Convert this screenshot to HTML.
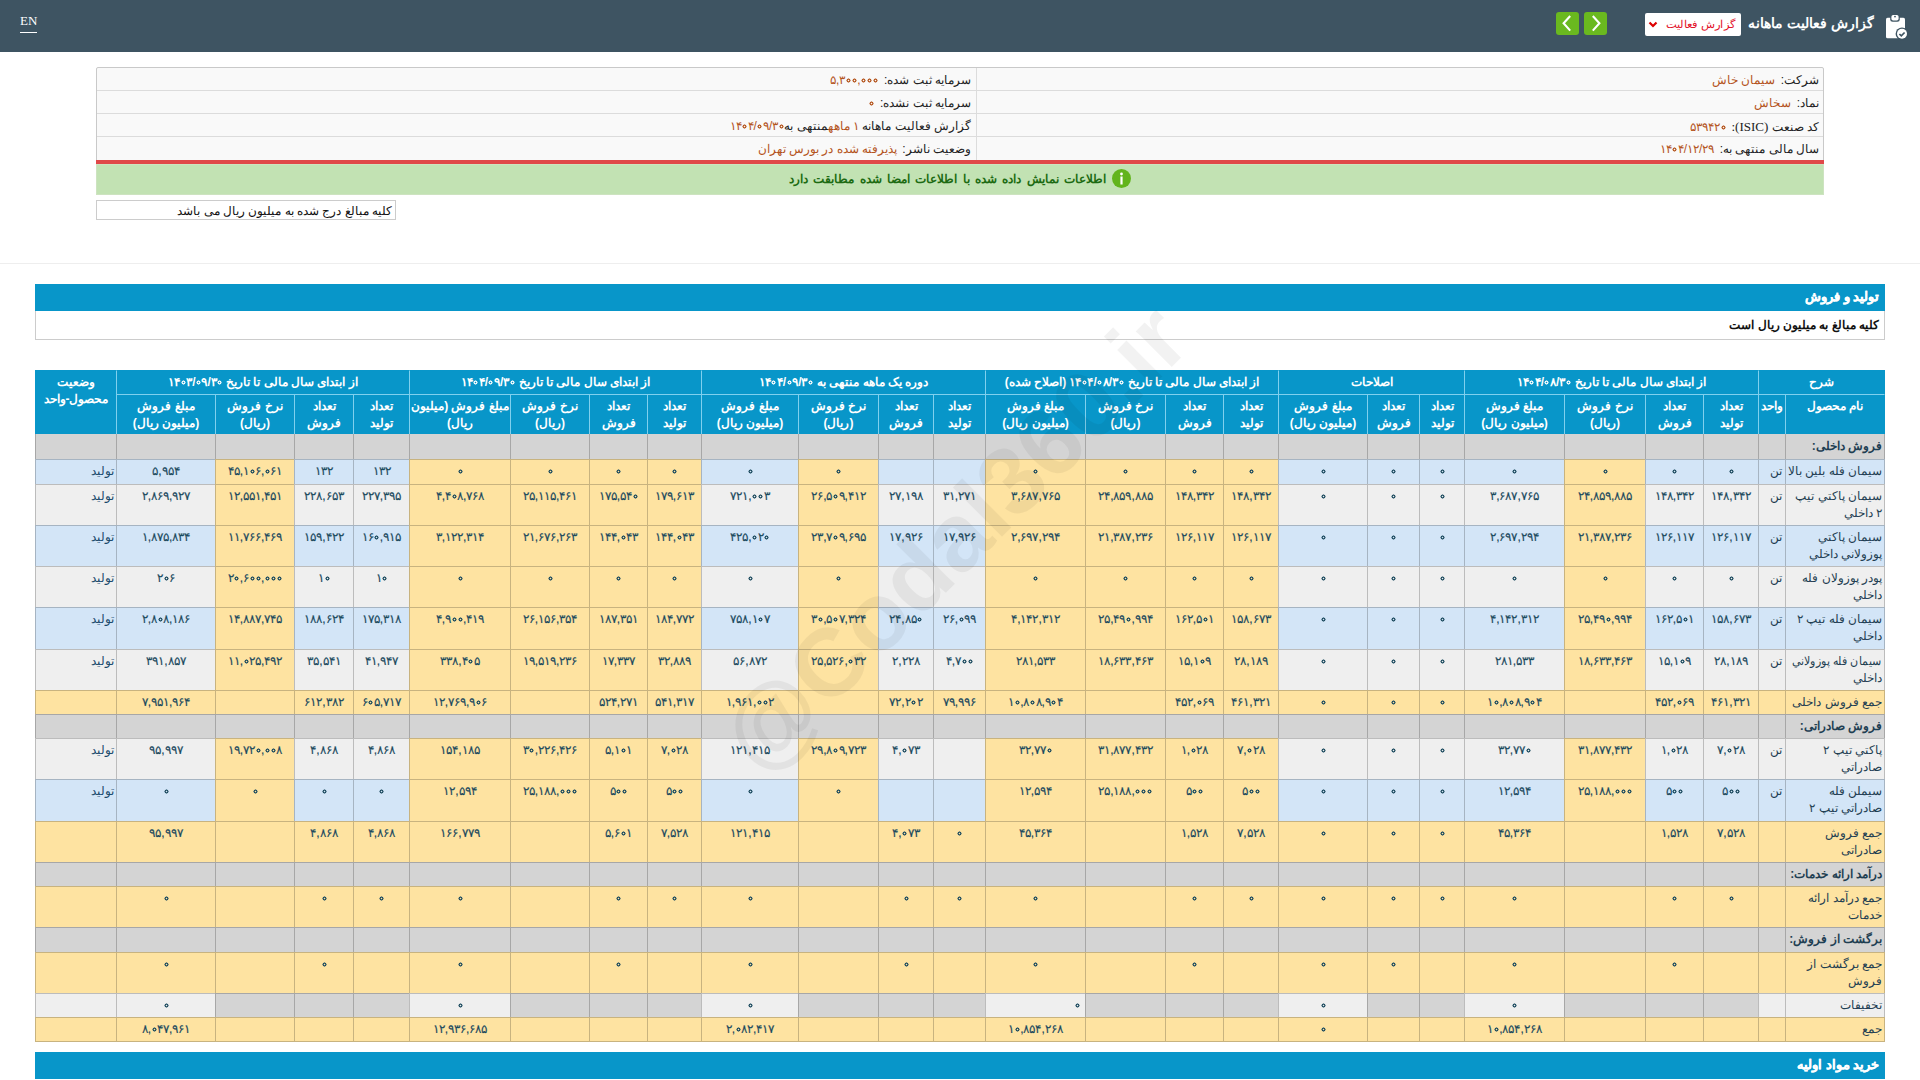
<!DOCTYPE html>
<html lang="fa" dir="rtl">
<head>
<meta charset="utf-8">
<title>گزارش فعالیت ماهانه</title>
<style>
html,body{margin:0;padding:0;}
body{width:1920px;height:1080px;overflow:hidden;position:relative;background:#fff;font-family:"Liberation Sans",sans-serif;font-size:12px;color:#222;}
.abs{position:absolute;}
#top{position:absolute;left:0;top:0;width:1920px;height:52px;background:#3e5462;}
#en{position:absolute;left:20px;top:13px;color:#fff;font-family:"Liberation Serif",serif;font-size:13px;line-height:16px;border-bottom:1px solid #fff;padding-bottom:3px;}
#title{position:absolute;right:46px;top:14px;color:#fff;font-weight:bold;font-size:13.5px;line-height:20px;white-space:nowrap;}
#dd{position:absolute;left:1645px;top:13px;width:96px;height:23px;background:#fff;border-radius:2px;box-sizing:border-box;}
#dd span{position:absolute;right:6px;top:2px;color:#e3122b;font-size:11px;word-spacing:1px;display:inline-block;transform:scaleX(1.05);transform-origin:100% 50%;line-height:18px;white-space:nowrap;}
.gb{position:absolute;top:12px;width:23px;height:23px;background:#6ab91f;border-radius:3px;}
#info{position:absolute;left:96px;top:67px;width:1728px;height:94px;background:#f9f9f9;border:1px solid #c9c9c9;box-sizing:border-box;border-radius:2px 2px 0 0;}
.ir{position:absolute;height:23px;line-height:25px;white-space:nowrap;font-size:12px;color:#222;}
.ir b{font-weight:normal;color:#b4541c;margin-right:2px;}
.ir b.nm0{margin-right:0}
.ser{font-family:"Liberation Serif",serif;font-size:13px;}
.hl{position:absolute;height:1px;background:#dcdcdc;}
#red{position:absolute;left:96px;top:160px;width:1728px;height:4px;background:#e04848;}
#green{position:absolute;left:96px;top:164px;width:1728px;height:31px;background:#c2e2b3;border:1px solid #cde3c0;box-sizing:border-box;}
#green span{position:absolute;left:0px;right:0;top:4px;text-align:center;color:#1c6b12;font-weight:bold;font-size:12px;word-spacing:2px;line-height:20px;white-space:nowrap;}
#green i{display:inline-block;width:19px;height:19px;border-radius:50%;background:#62b41c;vertical-align:-5px;margin-left:6px;}
#note{position:absolute;left:96px;top:200px;width:300px;height:20px;border:1px solid #ccc;box-sizing:border-box;background:#fff;}
#note span{position:absolute;right:3px;top:2px;line-height:16px;font-size:12px;color:#111;white-space:nowrap;}
#sep{position:absolute;left:0;top:263px;width:1920px;height:1px;background:#eee;}
.bar{position:absolute;left:35px;width:1850px;height:27px;background:#0896c9;}
.bar span{position:absolute;right:6px;top:5px;color:#fff;font-weight:bold;font-size:12.5px;line-height:16px;white-space:nowrap;-webkit-text-stroke:0.3px #fff;}
#sub{position:absolute;left:35px;top:311px;width:1850px;height:29px;border:1px solid #ccc;border-top:none;box-sizing:border-box;background:#fff;}
#sub span{position:absolute;right:5px;top:6px;font-weight:bold;font-size:12px;line-height:16px;color:#111;white-space:nowrap;}
.c{position:absolute;box-sizing:border-box;border-style:solid;border-color:rgba(0,0,0,0.21);border-width:1px 0 0 1px;text-align:center;font-size:12px;line-height:17px;padding-top:3px;color:#1a4a6c;overflow:hidden;}
.h{border-color:#7fd0ee;color:#fff;font-weight:bold;line-height:17px;}
.h1{padding-top:3px;}
.hv{padding-top:3px;}
.h2{padding-top:3px;}
.d{padding-top:3px;}
.nm{text-align:right;padding-right:2px;color:#1f3f52;white-space:nowrap;}
.un{text-align:right;padding-right:3px;color:#1f3f52;}
.n{font-weight:normal;-webkit-text-stroke:0.15px #1b4a5e;color:#1b4a5e;font-size:12px;letter-spacing:1px;}
.nb{direction:ltr;unicode-bidi:isolate;}
.z{display:inline-block;width:5px;height:5px;background:radial-gradient(circle at 50% 50%,transparent 0.6px,currentColor 1.1px,currentColor 1.75px,transparent 2.3px);font-size:0;vertical-align:1px;margin:0 0.5px;}
.sec{font-weight:bold;}
.st{text-align:right;padding-right:2px;}
.ra{text-align:right;padding-right:5px;}
#wm{position:absolute;left:954px;top:538px;width:0;height:0;}
#wm span{position:absolute;left:-340px;top:-60px;width:680px;text-align:center;font-size:96px;font-weight:bold;color:rgba(0,0,0,0.05);transform:rotate(-45deg);white-space:nowrap;line-height:120px;direction:ltr;}
</style>
</head>
<body>
<div id="top">
  <div id="en">EN</div>
  <svg class="abs" style="left:1884px;top:14px" width="26" height="27" viewBox="0 0 26 27">
    <rect x="2" y="3.7" width="19" height="20.6" rx="1.6" fill="#fff"/>
    <rect x="6.2" y="0" width="9.6" height="7.8" rx="2.4" fill="#3e5462"/>
    <rect x="7.4" y="1" width="7.2" height="5.6" rx="1.8" fill="#fff"/>
    <circle cx="11" cy="2.6" r="0.9" fill="#3e5462"/>
    <circle cx="18" cy="19.8" r="6.4" fill="#3e5462"/>
    <circle cx="18" cy="19.8" r="5" fill="#fff"/>
    <path d="M15.4 20 l1.9 1.9 l3.3 -3.4" fill="none" stroke="#3e5462" stroke-width="1.7"/>
  </svg>
  <div id="title">گزارش فعالیت ماهانه</div>
  <div id="dd"><span>گزارش فعالیت</span>
    <svg class="abs" style="left:3px;top:8px" width="10" height="7" viewBox="0 0 10 7"><path d="M1.5 1.5 L5 5 L8.5 1.5" fill="none" stroke="#d00" stroke-width="2.2"/></svg>
  </div>
  <div class="gb" style="left:1556px"><svg width="23" height="23" viewBox="0 0 23 23"><path d="M14.2 4 L7.6 11.3 L14.2 18.6" fill="none" stroke="#fff" stroke-width="2.1"/></svg></div>
  <div class="gb" style="left:1584px"><svg width="23" height="23" viewBox="0 0 23 23"><path d="M8.8 4 L15.4 11.3 L8.8 18.6" fill="none" stroke="#fff" stroke-width="2.1"/></svg></div>
</div>

<div id="info">
  <div class="hl" style="left:0;top:22px;width:1726px"></div>
  <div class="hl" style="left:0;top:45px;width:1726px"></div>
  <div class="hl" style="left:0;top:68px;width:1726px"></div>
  <div class="abs" style="left:879px;top:0;width:1px;height:92px;background:#dcdcdc"></div>
  <div class="ir" style="right:4px;top:0">شرکت: <b>سیمان خاش</b></div>
  <div class="ir" style="right:4px;top:23px">نماد: <b>سخاش</b></div>
  <div class="ir" style="right:4px;top:46px">کد صنعت <span class="ser">(ISIC):</span> <b><span class="nb">۵۳۹۴۲<i class="z"></i></span></b></div>
  <div class="ir" style="right:4px;top:69px">سال مالی منتهی به: <b><span class="nb">۱۴<i class="z"></i>۴/۱۲/۲۹</span></b></div>
  <div class="ir" style="right:852px;top:0">سرمایه ثبت شده: <b><span class="nb">۵,۳<i class="z"></i><i class="z"></i>,<i class="z"></i><i class="z"></i><i class="z"></i></span></b></div>
  <div class="ir" style="right:852px;top:23px">سرمایه ثبت نشده: <b><span class="nb"><i class="z"></i></span></b></div>
  <div class="ir" style="right:852px;top:46px">گزارش فعالیت ماهانه <b class="nm0">۱ ماهه</b>منتهی به<b class="nm0"><span class="nb">۱۴<i class="z"></i>۴/<i class="z"></i>۹/۳<i class="z"></i></span></b></div>
  <div class="ir" style="right:852px;top:69px">وضعیت ناشر: <b>پذیرفته شده در بورس تهران</b></div>
</div>
<div id="red"></div>
<div id="green"><span><i><svg width="19" height="19" viewBox="0 0 19 19"><circle cx="9.5" cy="5" r="1.4" fill="#fff"/><rect x="8.4" y="7.5" width="2.2" height="8" fill="#fff"/></svg></i>اطلاعات نمایش داده شده با اطلاعات امضا شده مطابقت دارد</span></div>
<div id="note"><span>کلیه مبالغ درج شده به میلیون ریال می باشد</span></div>
<div id="sep"></div>
<div class="bar" style="top:284px"><span>تولید و فروش</span></div>
<div id="sub"><span>کلیه مبالغ به میلیون ریال است</span></div>
<div class="c h h1" style="left:1758px;top:370px;width:127px;height:24px;background:#0896c9;border-top-color:#0896c9;border-right-color:#0896c9;border-right-width:1px;">شرح</div>
<div class="c h h1" style="left:1464px;top:370px;width:294px;height:24px;background:#0896c9;border-top-color:#0896c9;">از ابتدای سال مالی تا تاریخ <span class="nb">۱۴<i class="z"></i>۴/<i class="z"></i>۸/۳<i class="z"></i></span></div>
<div class="c h h1" style="left:1278px;top:370px;width:186px;height:24px;background:#0896c9;border-top-color:#0896c9;">اصلاحات</div>
<div class="c h h1" style="left:985px;top:370px;width:293px;height:24px;background:#0896c9;border-top-color:#0896c9;">از ابتدای سال مالی تا تاریخ <span class="nb">۱۴<i class="z"></i>۴/<i class="z"></i>۸/۳<i class="z"></i></span> (اصلاح شده)</div>
<div class="c h h1" style="left:701px;top:370px;width:284px;height:24px;background:#0896c9;border-top-color:#0896c9;">دوره یک ماهه منتهی به <span class="nb">۱۴<i class="z"></i>۴/<i class="z"></i>۹/۳<i class="z"></i></span></div>
<div class="c h h1" style="left:409px;top:370px;width:292px;height:24px;background:#0896c9;border-top-color:#0896c9;">از ابتدای سال مالی تا تاریخ <span class="nb">۱۴<i class="z"></i>۴/<i class="z"></i>۹/۳<i class="z"></i></span></div>
<div class="c h h1" style="left:116px;top:370px;width:293px;height:24px;background:#0896c9;border-top-color:#0896c9;">از ابتدای سال مالی تا تاریخ <span class="nb">۱۴<i class="z"></i>۳/<i class="z"></i>۹/۳<i class="z"></i></span></div>
<div class="c h h1 hv" style="left:35px;top:370px;width:81px;height:65px;background:#0896c9;border-top-color:#0896c9;border-left-color:#0896c9;border-bottom-width:1px;">وضعیت<br>محصول-واحد</div>
<div class="c h h2" style="left:1785px;top:394px;width:100px;height:41px;background:#0896c9;border-right-color:#0896c9;border-bottom-width:1px;border-right-width:1px;">نام محصول</div>
<div class="c h h2" style="left:1758px;top:394px;width:27px;height:41px;background:#0896c9;border-bottom-width:1px;">واحد</div>
<div class="c h h2" style="left:1703px;top:394px;width:55px;height:41px;background:#0896c9;border-bottom-width:1px;">تعداد<br>تولید</div>
<div class="c h h2" style="left:1645px;top:394px;width:58px;height:41px;background:#0896c9;border-bottom-width:1px;">تعداد<br>فروش</div>
<div class="c h h2" style="left:1564px;top:394px;width:81px;height:41px;background:#0896c9;border-bottom-width:1px;">نرخ فروش<br>(ریال)</div>
<div class="c h h2" style="left:1464px;top:394px;width:100px;height:41px;background:#0896c9;border-bottom-width:1px;">مبلغ فروش<br>(میلیون ریال)</div>
<div class="c h h2" style="left:1419px;top:394px;width:45px;height:41px;background:#0896c9;border-bottom-width:1px;">تعداد<br>تولید</div>
<div class="c h h2" style="left:1367px;top:394px;width:52px;height:41px;background:#0896c9;border-bottom-width:1px;">تعداد<br>فروش</div>
<div class="c h h2" style="left:1278px;top:394px;width:89px;height:41px;background:#0896c9;border-bottom-width:1px;">مبلغ فروش<br>(میلیون ریال)</div>
<div class="c h h2" style="left:1223px;top:394px;width:55px;height:41px;background:#0896c9;border-bottom-width:1px;">تعداد<br>تولید</div>
<div class="c h h2" style="left:1165px;top:394px;width:58px;height:41px;background:#0896c9;border-bottom-width:1px;">تعداد<br>فروش</div>
<div class="c h h2" style="left:1085px;top:394px;width:80px;height:41px;background:#0896c9;border-bottom-width:1px;">نرخ فروش<br>(ریال)</div>
<div class="c h h2" style="left:985px;top:394px;width:100px;height:41px;background:#0896c9;border-bottom-width:1px;">مبلغ فروش<br>(میلیون ریال)</div>
<div class="c h h2" style="left:933px;top:394px;width:52px;height:41px;background:#0896c9;border-bottom-width:1px;">تعداد<br>تولید</div>
<div class="c h h2" style="left:878px;top:394px;width:55px;height:41px;background:#0896c9;border-bottom-width:1px;">تعداد<br>فروش</div>
<div class="c h h2" style="left:798px;top:394px;width:80px;height:41px;background:#0896c9;border-bottom-width:1px;">نرخ فروش<br>(ریال)</div>
<div class="c h h2" style="left:701px;top:394px;width:97px;height:41px;background:#0896c9;border-bottom-width:1px;">مبلغ فروش<br>(میلیون ریال)</div>
<div class="c h h2" style="left:647px;top:394px;width:54px;height:41px;background:#0896c9;border-bottom-width:1px;">تعداد<br>تولید</div>
<div class="c h h2" style="left:589px;top:394px;width:58px;height:41px;background:#0896c9;border-bottom-width:1px;">تعداد<br>فروش</div>
<div class="c h h2" style="left:510px;top:394px;width:79px;height:41px;background:#0896c9;border-bottom-width:1px;">نرخ فروش<br>(ریال)</div>
<div class="c h h2" style="left:409px;top:394px;width:101px;height:41px;background:#0896c9;border-bottom-width:1px;">مبلغ فروش (میلیون<br>ریال)</div>
<div class="c h h2" style="left:353px;top:394px;width:56px;height:41px;background:#0896c9;border-bottom-width:1px;">تعداد<br>تولید</div>
<div class="c h h2" style="left:294px;top:394px;width:59px;height:41px;background:#0896c9;border-bottom-width:1px;">تعداد<br>فروش</div>
<div class="c h h2" style="left:215px;top:394px;width:79px;height:41px;background:#0896c9;border-bottom-width:1px;">نرخ فروش<br>(ریال)</div>
<div class="c h h2" style="left:116px;top:394px;width:99px;height:41px;background:#0896c9;border-bottom-width:1px;">مبلغ فروش<br>(میلیون ریال)</div>
<div class="c d nm sec" style="left:1785px;top:434px;width:100px;height:25px;background:#d4d4d4;border-top:none;padding-top:4px;border-right-width:1px;">فروش داخلی:</div>
<div class="c d un" style="left:1758px;top:434px;width:27px;height:25px;background:#d4d4d4;border-top:none;padding-top:4px;"></div>
<div class="c d" style="left:1703px;top:434px;width:55px;height:25px;background:#d4d4d4;border-top:none;padding-top:4px;"></div>
<div class="c d" style="left:1645px;top:434px;width:58px;height:25px;background:#d4d4d4;border-top:none;padding-top:4px;"></div>
<div class="c d" style="left:1564px;top:434px;width:81px;height:25px;background:#d4d4d4;border-top:none;padding-top:4px;"></div>
<div class="c d" style="left:1464px;top:434px;width:100px;height:25px;background:#d4d4d4;border-top:none;padding-top:4px;"></div>
<div class="c d" style="left:1419px;top:434px;width:45px;height:25px;background:#d4d4d4;border-top:none;padding-top:4px;"></div>
<div class="c d" style="left:1367px;top:434px;width:52px;height:25px;background:#d4d4d4;border-top:none;padding-top:4px;"></div>
<div class="c d" style="left:1278px;top:434px;width:89px;height:25px;background:#d4d4d4;border-top:none;padding-top:4px;"></div>
<div class="c d" style="left:1223px;top:434px;width:55px;height:25px;background:#d4d4d4;border-top:none;padding-top:4px;"></div>
<div class="c d" style="left:1165px;top:434px;width:58px;height:25px;background:#d4d4d4;border-top:none;padding-top:4px;"></div>
<div class="c d" style="left:1085px;top:434px;width:80px;height:25px;background:#d4d4d4;border-top:none;padding-top:4px;"></div>
<div class="c d" style="left:985px;top:434px;width:100px;height:25px;background:#d4d4d4;border-top:none;padding-top:4px;"></div>
<div class="c d" style="left:933px;top:434px;width:52px;height:25px;background:#d4d4d4;border-top:none;padding-top:4px;"></div>
<div class="c d" style="left:878px;top:434px;width:55px;height:25px;background:#d4d4d4;border-top:none;padding-top:4px;"></div>
<div class="c d" style="left:798px;top:434px;width:80px;height:25px;background:#d4d4d4;border-top:none;padding-top:4px;"></div>
<div class="c d" style="left:701px;top:434px;width:97px;height:25px;background:#d4d4d4;border-top:none;padding-top:4px;"></div>
<div class="c d" style="left:647px;top:434px;width:54px;height:25px;background:#d4d4d4;border-top:none;padding-top:4px;"></div>
<div class="c d" style="left:589px;top:434px;width:58px;height:25px;background:#d4d4d4;border-top:none;padding-top:4px;"></div>
<div class="c d" style="left:510px;top:434px;width:79px;height:25px;background:#d4d4d4;border-top:none;padding-top:4px;"></div>
<div class="c d" style="left:409px;top:434px;width:101px;height:25px;background:#d4d4d4;border-top:none;padding-top:4px;"></div>
<div class="c d" style="left:353px;top:434px;width:56px;height:25px;background:#d4d4d4;border-top:none;padding-top:4px;"></div>
<div class="c d" style="left:294px;top:434px;width:59px;height:25px;background:#d4d4d4;border-top:none;padding-top:4px;"></div>
<div class="c d" style="left:215px;top:434px;width:79px;height:25px;background:#d4d4d4;border-top:none;padding-top:4px;"></div>
<div class="c d" style="left:116px;top:434px;width:99px;height:25px;background:#d4d4d4;border-top:none;padding-top:4px;"></div>
<div class="c d st" style="left:35px;top:434px;width:81px;height:25px;background:#d4d4d4;border-top:none;padding-top:4px;"></div>
<div class="c d nm" style="left:1785px;top:459px;width:100px;height:25px;background:#d3e5f7;border-right-width:1px;">سیمان فله بلین بالا</div>
<div class="c d un" style="left:1758px;top:459px;width:27px;height:25px;background:#d3e5f7;">تن</div>
<div class="c d" style="left:1703px;top:459px;width:55px;height:25px;background:#d3e5f7;"><span class="n"><span class="nb"><i class="z"></i></span></span></div>
<div class="c d" style="left:1645px;top:459px;width:58px;height:25px;background:#d3e5f7;"><span class="n"><span class="nb"><i class="z"></i></span></span></div>
<div class="c d" style="left:1564px;top:459px;width:81px;height:25px;background:#fee3a1;"><span class="n"><span class="nb"><i class="z"></i></span></span></div>
<div class="c d" style="left:1464px;top:459px;width:100px;height:25px;background:#d3e5f7;"><span class="n"><span class="nb"><i class="z"></i></span></span></div>
<div class="c d" style="left:1419px;top:459px;width:45px;height:25px;background:#d3e5f7;"><span class="n"><span class="nb"><i class="z"></i></span></span></div>
<div class="c d" style="left:1367px;top:459px;width:52px;height:25px;background:#d3e5f7;"><span class="n"><span class="nb"><i class="z"></i></span></span></div>
<div class="c d" style="left:1278px;top:459px;width:89px;height:25px;background:#d3e5f7;"><span class="n"><span class="nb"><i class="z"></i></span></span></div>
<div class="c d" style="left:1223px;top:459px;width:55px;height:25px;background:#fee3a1;"><span class="n"><span class="nb"><i class="z"></i></span></span></div>
<div class="c d" style="left:1165px;top:459px;width:58px;height:25px;background:#fee3a1;"><span class="n"><span class="nb"><i class="z"></i></span></span></div>
<div class="c d" style="left:1085px;top:459px;width:80px;height:25px;background:#fee3a1;"><span class="n"><span class="nb"><i class="z"></i></span></span></div>
<div class="c d" style="left:985px;top:459px;width:100px;height:25px;background:#fee3a1;"><span class="n"><span class="nb"><i class="z"></i></span></span></div>
<div class="c d" style="left:933px;top:459px;width:52px;height:25px;background:#d3e5f7;"></div>
<div class="c d" style="left:878px;top:459px;width:55px;height:25px;background:#d3e5f7;"></div>
<div class="c d" style="left:798px;top:459px;width:80px;height:25px;background:#fee3a1;"><span class="n"><span class="nb"><i class="z"></i></span></span></div>
<div class="c d" style="left:701px;top:459px;width:97px;height:25px;background:#d3e5f7;"><span class="n"><span class="nb"><i class="z"></i></span></span></div>
<div class="c d" style="left:647px;top:459px;width:54px;height:25px;background:#fee3a1;"><span class="n"><span class="nb"><i class="z"></i></span></span></div>
<div class="c d" style="left:589px;top:459px;width:58px;height:25px;background:#fee3a1;"><span class="n"><span class="nb"><i class="z"></i></span></span></div>
<div class="c d" style="left:510px;top:459px;width:79px;height:25px;background:#fee3a1;"><span class="n"><span class="nb"><i class="z"></i></span></span></div>
<div class="c d" style="left:409px;top:459px;width:101px;height:25px;background:#fee3a1;"><span class="n"><span class="nb"><i class="z"></i></span></span></div>
<div class="c d" style="left:353px;top:459px;width:56px;height:25px;background:#d3e5f7;"><span class="n">۱۳۲</span></div>
<div class="c d" style="left:294px;top:459px;width:59px;height:25px;background:#d3e5f7;"><span class="n">۱۳۲</span></div>
<div class="c d" style="left:215px;top:459px;width:79px;height:25px;background:#fee3a1;"><span class="n"><span class="nb">۴۵,۱<i class="z"></i>۶,<i class="z"></i>۶۱</span></span></div>
<div class="c d" style="left:116px;top:459px;width:99px;height:25px;background:#d3e5f7;"><span class="n">۵,۹۵۴</span></div>
<div class="c d st" style="left:35px;top:459px;width:81px;height:25px;background:#d3e5f7;">تولید</div>
<div class="c d nm" style="left:1785px;top:484px;width:100px;height:41px;background:#efefef;border-right-width:1px;">سیمان پاکتي تیپ<br>۲ داخلي</div>
<div class="c d un" style="left:1758px;top:484px;width:27px;height:41px;background:#efefef;">تن</div>
<div class="c d" style="left:1703px;top:484px;width:55px;height:41px;background:#efefef;"><span class="n">۱۴۸,۳۴۲</span></div>
<div class="c d" style="left:1645px;top:484px;width:58px;height:41px;background:#efefef;"><span class="n">۱۴۸,۳۴۲</span></div>
<div class="c d" style="left:1564px;top:484px;width:81px;height:41px;background:#fee3a1;"><span class="n">۲۴,۸۵۹,۸۸۵</span></div>
<div class="c d" style="left:1464px;top:484px;width:100px;height:41px;background:#efefef;"><span class="n">۳,۶۸۷,۷۶۵</span></div>
<div class="c d" style="left:1419px;top:484px;width:45px;height:41px;background:#efefef;"><span class="n"><span class="nb"><i class="z"></i></span></span></div>
<div class="c d" style="left:1367px;top:484px;width:52px;height:41px;background:#efefef;"><span class="n"><span class="nb"><i class="z"></i></span></span></div>
<div class="c d" style="left:1278px;top:484px;width:89px;height:41px;background:#efefef;"><span class="n"><span class="nb"><i class="z"></i></span></span></div>
<div class="c d" style="left:1223px;top:484px;width:55px;height:41px;background:#fee3a1;"><span class="n">۱۴۸,۳۴۲</span></div>
<div class="c d" style="left:1165px;top:484px;width:58px;height:41px;background:#fee3a1;"><span class="n">۱۴۸,۳۴۲</span></div>
<div class="c d" style="left:1085px;top:484px;width:80px;height:41px;background:#fee3a1;"><span class="n">۲۴,۸۵۹,۸۸۵</span></div>
<div class="c d" style="left:985px;top:484px;width:100px;height:41px;background:#fee3a1;"><span class="n">۳,۶۸۷,۷۶۵</span></div>
<div class="c d" style="left:933px;top:484px;width:52px;height:41px;background:#efefef;"><span class="n">۳۱,۲۷۱</span></div>
<div class="c d" style="left:878px;top:484px;width:55px;height:41px;background:#efefef;"><span class="n">۲۷,۱۹۸</span></div>
<div class="c d" style="left:798px;top:484px;width:80px;height:41px;background:#fee3a1;"><span class="n"><span class="nb">۲۶,۵<i class="z"></i>۹,۴۱۲</span></span></div>
<div class="c d" style="left:701px;top:484px;width:97px;height:41px;background:#efefef;"><span class="n"><span class="nb">۷۲۱,<i class="z"></i><i class="z"></i>۳</span></span></div>
<div class="c d" style="left:647px;top:484px;width:54px;height:41px;background:#fee3a1;"><span class="n">۱۷۹,۶۱۳</span></div>
<div class="c d" style="left:589px;top:484px;width:58px;height:41px;background:#fee3a1;"><span class="n"><span class="nb">۱۷۵,۵۴<i class="z"></i></span></span></div>
<div class="c d" style="left:510px;top:484px;width:79px;height:41px;background:#fee3a1;"><span class="n">۲۵,۱۱۵,۴۶۱</span></div>
<div class="c d" style="left:409px;top:484px;width:101px;height:41px;background:#fee3a1;"><span class="n"><span class="nb">۴,۴<i class="z"></i>۸,۷۶۸</span></span></div>
<div class="c d" style="left:353px;top:484px;width:56px;height:41px;background:#efefef;"><span class="n">۲۲۷,۳۹۵</span></div>
<div class="c d" style="left:294px;top:484px;width:59px;height:41px;background:#efefef;"><span class="n">۲۲۸,۶۵۳</span></div>
<div class="c d" style="left:215px;top:484px;width:79px;height:41px;background:#fee3a1;"><span class="n">۱۲,۵۵۱,۴۵۱</span></div>
<div class="c d" style="left:116px;top:484px;width:99px;height:41px;background:#efefef;"><span class="n">۲,۸۶۹,۹۲۷</span></div>
<div class="c d st" style="left:35px;top:484px;width:81px;height:41px;background:#efefef;">تولید</div>
<div class="c d nm" style="left:1785px;top:525px;width:100px;height:41px;background:#d3e5f7;border-right-width:1px;">سیمان پاکتي<br>پوزولاني داخلي</div>
<div class="c d un" style="left:1758px;top:525px;width:27px;height:41px;background:#d3e5f7;">تن</div>
<div class="c d" style="left:1703px;top:525px;width:55px;height:41px;background:#d3e5f7;"><span class="n">۱۲۶,۱۱۷</span></div>
<div class="c d" style="left:1645px;top:525px;width:58px;height:41px;background:#d3e5f7;"><span class="n">۱۲۶,۱۱۷</span></div>
<div class="c d" style="left:1564px;top:525px;width:81px;height:41px;background:#fee3a1;"><span class="n">۲۱,۳۸۷,۲۳۶</span></div>
<div class="c d" style="left:1464px;top:525px;width:100px;height:41px;background:#d3e5f7;"><span class="n">۲,۶۹۷,۲۹۴</span></div>
<div class="c d" style="left:1419px;top:525px;width:45px;height:41px;background:#d3e5f7;"><span class="n"><span class="nb"><i class="z"></i></span></span></div>
<div class="c d" style="left:1367px;top:525px;width:52px;height:41px;background:#d3e5f7;"><span class="n"><span class="nb"><i class="z"></i></span></span></div>
<div class="c d" style="left:1278px;top:525px;width:89px;height:41px;background:#d3e5f7;"><span class="n"><span class="nb"><i class="z"></i></span></span></div>
<div class="c d" style="left:1223px;top:525px;width:55px;height:41px;background:#fee3a1;"><span class="n">۱۲۶,۱۱۷</span></div>
<div class="c d" style="left:1165px;top:525px;width:58px;height:41px;background:#fee3a1;"><span class="n">۱۲۶,۱۱۷</span></div>
<div class="c d" style="left:1085px;top:525px;width:80px;height:41px;background:#fee3a1;"><span class="n">۲۱,۳۸۷,۲۳۶</span></div>
<div class="c d" style="left:985px;top:525px;width:100px;height:41px;background:#fee3a1;"><span class="n">۲,۶۹۷,۲۹۴</span></div>
<div class="c d" style="left:933px;top:525px;width:52px;height:41px;background:#d3e5f7;"><span class="n">۱۷,۹۲۶</span></div>
<div class="c d" style="left:878px;top:525px;width:55px;height:41px;background:#d3e5f7;"><span class="n">۱۷,۹۲۶</span></div>
<div class="c d" style="left:798px;top:525px;width:80px;height:41px;background:#fee3a1;"><span class="n"><span class="nb">۲۳,۷<i class="z"></i>۹,۶۹۵</span></span></div>
<div class="c d" style="left:701px;top:525px;width:97px;height:41px;background:#d3e5f7;"><span class="n"><span class="nb">۴۲۵,<i class="z"></i>۲<i class="z"></i></span></span></div>
<div class="c d" style="left:647px;top:525px;width:54px;height:41px;background:#fee3a1;"><span class="n"><span class="nb">۱۴۴,<i class="z"></i>۴۳</span></span></div>
<div class="c d" style="left:589px;top:525px;width:58px;height:41px;background:#fee3a1;"><span class="n"><span class="nb">۱۴۴,<i class="z"></i>۴۳</span></span></div>
<div class="c d" style="left:510px;top:525px;width:79px;height:41px;background:#fee3a1;"><span class="n">۲۱,۶۷۶,۲۶۳</span></div>
<div class="c d" style="left:409px;top:525px;width:101px;height:41px;background:#fee3a1;"><span class="n">۳,۱۲۲,۳۱۴</span></div>
<div class="c d" style="left:353px;top:525px;width:56px;height:41px;background:#d3e5f7;"><span class="n"><span class="nb">۱۶<i class="z"></i>,۹۱۵</span></span></div>
<div class="c d" style="left:294px;top:525px;width:59px;height:41px;background:#d3e5f7;"><span class="n">۱۵۹,۴۲۲</span></div>
<div class="c d" style="left:215px;top:525px;width:79px;height:41px;background:#fee3a1;"><span class="n">۱۱,۷۶۶,۴۶۹</span></div>
<div class="c d" style="left:116px;top:525px;width:99px;height:41px;background:#d3e5f7;"><span class="n">۱,۸۷۵,۸۳۴</span></div>
<div class="c d st" style="left:35px;top:525px;width:81px;height:41px;background:#d3e5f7;">تولید</div>
<div class="c d nm" style="left:1785px;top:566px;width:100px;height:41px;background:#efefef;border-right-width:1px;">پودر پوزولان فله<br>داخلي</div>
<div class="c d un" style="left:1758px;top:566px;width:27px;height:41px;background:#efefef;">تن</div>
<div class="c d" style="left:1703px;top:566px;width:55px;height:41px;background:#efefef;"><span class="n"><span class="nb"><i class="z"></i></span></span></div>
<div class="c d" style="left:1645px;top:566px;width:58px;height:41px;background:#efefef;"><span class="n"><span class="nb"><i class="z"></i></span></span></div>
<div class="c d" style="left:1564px;top:566px;width:81px;height:41px;background:#fee3a1;"><span class="n"><span class="nb"><i class="z"></i></span></span></div>
<div class="c d" style="left:1464px;top:566px;width:100px;height:41px;background:#efefef;"><span class="n"><span class="nb"><i class="z"></i></span></span></div>
<div class="c d" style="left:1419px;top:566px;width:45px;height:41px;background:#efefef;"><span class="n"><span class="nb"><i class="z"></i></span></span></div>
<div class="c d" style="left:1367px;top:566px;width:52px;height:41px;background:#efefef;"><span class="n"><span class="nb"><i class="z"></i></span></span></div>
<div class="c d" style="left:1278px;top:566px;width:89px;height:41px;background:#efefef;"><span class="n"><span class="nb"><i class="z"></i></span></span></div>
<div class="c d" style="left:1223px;top:566px;width:55px;height:41px;background:#fee3a1;"><span class="n"><span class="nb"><i class="z"></i></span></span></div>
<div class="c d" style="left:1165px;top:566px;width:58px;height:41px;background:#fee3a1;"><span class="n"><span class="nb"><i class="z"></i></span></span></div>
<div class="c d" style="left:1085px;top:566px;width:80px;height:41px;background:#fee3a1;"><span class="n"><span class="nb"><i class="z"></i></span></span></div>
<div class="c d" style="left:985px;top:566px;width:100px;height:41px;background:#fee3a1;"><span class="n"><span class="nb"><i class="z"></i></span></span></div>
<div class="c d" style="left:933px;top:566px;width:52px;height:41px;background:#efefef;"></div>
<div class="c d" style="left:878px;top:566px;width:55px;height:41px;background:#efefef;"></div>
<div class="c d" style="left:798px;top:566px;width:80px;height:41px;background:#fee3a1;"><span class="n"><span class="nb"><i class="z"></i></span></span></div>
<div class="c d" style="left:701px;top:566px;width:97px;height:41px;background:#efefef;"><span class="n"><span class="nb"><i class="z"></i></span></span></div>
<div class="c d" style="left:647px;top:566px;width:54px;height:41px;background:#fee3a1;"><span class="n"><span class="nb"><i class="z"></i></span></span></div>
<div class="c d" style="left:589px;top:566px;width:58px;height:41px;background:#fee3a1;"><span class="n"><span class="nb"><i class="z"></i></span></span></div>
<div class="c d" style="left:510px;top:566px;width:79px;height:41px;background:#fee3a1;"><span class="n"><span class="nb"><i class="z"></i></span></span></div>
<div class="c d" style="left:409px;top:566px;width:101px;height:41px;background:#fee3a1;"><span class="n"><span class="nb"><i class="z"></i></span></span></div>
<div class="c d" style="left:353px;top:566px;width:56px;height:41px;background:#efefef;"><span class="n"><span class="nb">۱<i class="z"></i></span></span></div>
<div class="c d" style="left:294px;top:566px;width:59px;height:41px;background:#efefef;"><span class="n"><span class="nb">۱<i class="z"></i></span></span></div>
<div class="c d" style="left:215px;top:566px;width:79px;height:41px;background:#fee3a1;"><span class="n"><span class="nb">۲<i class="z"></i>,۶<i class="z"></i><i class="z"></i>,<i class="z"></i><i class="z"></i><i class="z"></i></span></span></div>
<div class="c d" style="left:116px;top:566px;width:99px;height:41px;background:#efefef;"><span class="n"><span class="nb">۲<i class="z"></i>۶</span></span></div>
<div class="c d st" style="left:35px;top:566px;width:81px;height:41px;background:#efefef;">تولید</div>
<div class="c d nm" style="left:1785px;top:607px;width:100px;height:42px;background:#d3e5f7;border-right-width:1px;">سیمان فله تیپ ۲<br>داخلي</div>
<div class="c d un" style="left:1758px;top:607px;width:27px;height:42px;background:#d3e5f7;">تن</div>
<div class="c d" style="left:1703px;top:607px;width:55px;height:42px;background:#d3e5f7;"><span class="n">۱۵۸,۶۷۳</span></div>
<div class="c d" style="left:1645px;top:607px;width:58px;height:42px;background:#d3e5f7;"><span class="n"><span class="nb">۱۶۲,۵<i class="z"></i>۱</span></span></div>
<div class="c d" style="left:1564px;top:607px;width:81px;height:42px;background:#fee3a1;"><span class="n"><span class="nb">۲۵,۴۹<i class="z"></i>,۹۹۴</span></span></div>
<div class="c d" style="left:1464px;top:607px;width:100px;height:42px;background:#d3e5f7;"><span class="n">۴,۱۴۲,۳۱۲</span></div>
<div class="c d" style="left:1419px;top:607px;width:45px;height:42px;background:#d3e5f7;"><span class="n"><span class="nb"><i class="z"></i></span></span></div>
<div class="c d" style="left:1367px;top:607px;width:52px;height:42px;background:#d3e5f7;"><span class="n"><span class="nb"><i class="z"></i></span></span></div>
<div class="c d" style="left:1278px;top:607px;width:89px;height:42px;background:#d3e5f7;"><span class="n"><span class="nb"><i class="z"></i></span></span></div>
<div class="c d" style="left:1223px;top:607px;width:55px;height:42px;background:#fee3a1;"><span class="n">۱۵۸,۶۷۳</span></div>
<div class="c d" style="left:1165px;top:607px;width:58px;height:42px;background:#fee3a1;"><span class="n"><span class="nb">۱۶۲,۵<i class="z"></i>۱</span></span></div>
<div class="c d" style="left:1085px;top:607px;width:80px;height:42px;background:#fee3a1;"><span class="n"><span class="nb">۲۵,۴۹<i class="z"></i>,۹۹۴</span></span></div>
<div class="c d" style="left:985px;top:607px;width:100px;height:42px;background:#fee3a1;"><span class="n">۴,۱۴۲,۳۱۲</span></div>
<div class="c d" style="left:933px;top:607px;width:52px;height:42px;background:#d3e5f7;"><span class="n"><span class="nb">۲۶,<i class="z"></i>۹۹</span></span></div>
<div class="c d" style="left:878px;top:607px;width:55px;height:42px;background:#d3e5f7;"><span class="n"><span class="nb">۲۴,۸۵<i class="z"></i></span></span></div>
<div class="c d" style="left:798px;top:607px;width:80px;height:42px;background:#fee3a1;"><span class="n"><span class="nb">۳<i class="z"></i>,۵<i class="z"></i>۷,۳۲۴</span></span></div>
<div class="c d" style="left:701px;top:607px;width:97px;height:42px;background:#d3e5f7;"><span class="n"><span class="nb">۷۵۸,۱<i class="z"></i>۷</span></span></div>
<div class="c d" style="left:647px;top:607px;width:54px;height:42px;background:#fee3a1;"><span class="n">۱۸۴,۷۷۲</span></div>
<div class="c d" style="left:589px;top:607px;width:58px;height:42px;background:#fee3a1;"><span class="n">۱۸۷,۳۵۱</span></div>
<div class="c d" style="left:510px;top:607px;width:79px;height:42px;background:#fee3a1;"><span class="n">۲۶,۱۵۶,۳۵۴</span></div>
<div class="c d" style="left:409px;top:607px;width:101px;height:42px;background:#fee3a1;"><span class="n"><span class="nb">۴,۹<i class="z"></i><i class="z"></i>,۴۱۹</span></span></div>
<div class="c d" style="left:353px;top:607px;width:56px;height:42px;background:#d3e5f7;"><span class="n">۱۷۵,۳۱۸</span></div>
<div class="c d" style="left:294px;top:607px;width:59px;height:42px;background:#d3e5f7;"><span class="n">۱۸۸,۶۲۴</span></div>
<div class="c d" style="left:215px;top:607px;width:79px;height:42px;background:#fee3a1;"><span class="n">۱۴,۸۸۷,۷۴۵</span></div>
<div class="c d" style="left:116px;top:607px;width:99px;height:42px;background:#d3e5f7;"><span class="n"><span class="nb">۲,۸<i class="z"></i>۸,۱۸۶</span></span></div>
<div class="c d st" style="left:35px;top:607px;width:81px;height:42px;background:#d3e5f7;">تولید</div>
<div class="c d nm" style="left:1785px;top:649px;width:100px;height:41px;background:#efefef;border-right-width:1px;"><span style="display:inline-block;transform:scaleX(0.92);transform-origin:100% 50%">سیمان فله پوزولاني</span><br>داخلي</div>
<div class="c d un" style="left:1758px;top:649px;width:27px;height:41px;background:#efefef;">تن</div>
<div class="c d" style="left:1703px;top:649px;width:55px;height:41px;background:#efefef;"><span class="n">۲۸,۱۸۹</span></div>
<div class="c d" style="left:1645px;top:649px;width:58px;height:41px;background:#efefef;"><span class="n"><span class="nb">۱۵,۱<i class="z"></i>۹</span></span></div>
<div class="c d" style="left:1564px;top:649px;width:81px;height:41px;background:#fee3a1;"><span class="n">۱۸,۶۳۳,۴۶۳</span></div>
<div class="c d" style="left:1464px;top:649px;width:100px;height:41px;background:#efefef;"><span class="n">۲۸۱,۵۳۳</span></div>
<div class="c d" style="left:1419px;top:649px;width:45px;height:41px;background:#efefef;"><span class="n"><span class="nb"><i class="z"></i></span></span></div>
<div class="c d" style="left:1367px;top:649px;width:52px;height:41px;background:#efefef;"><span class="n"><span class="nb"><i class="z"></i></span></span></div>
<div class="c d" style="left:1278px;top:649px;width:89px;height:41px;background:#efefef;"><span class="n"><span class="nb"><i class="z"></i></span></span></div>
<div class="c d" style="left:1223px;top:649px;width:55px;height:41px;background:#fee3a1;"><span class="n">۲۸,۱۸۹</span></div>
<div class="c d" style="left:1165px;top:649px;width:58px;height:41px;background:#fee3a1;"><span class="n"><span class="nb">۱۵,۱<i class="z"></i>۹</span></span></div>
<div class="c d" style="left:1085px;top:649px;width:80px;height:41px;background:#fee3a1;"><span class="n">۱۸,۶۳۳,۴۶۳</span></div>
<div class="c d" style="left:985px;top:649px;width:100px;height:41px;background:#fee3a1;"><span class="n">۲۸۱,۵۳۳</span></div>
<div class="c d" style="left:933px;top:649px;width:52px;height:41px;background:#efefef;"><span class="n"><span class="nb">۴,۷<i class="z"></i><i class="z"></i></span></span></div>
<div class="c d" style="left:878px;top:649px;width:55px;height:41px;background:#efefef;"><span class="n">۲,۲۲۸</span></div>
<div class="c d" style="left:798px;top:649px;width:80px;height:41px;background:#fee3a1;"><span class="n"><span class="nb">۲۵,۵۲۶,<i class="z"></i>۳۲</span></span></div>
<div class="c d" style="left:701px;top:649px;width:97px;height:41px;background:#efefef;"><span class="n">۵۶,۸۷۲</span></div>
<div class="c d" style="left:647px;top:649px;width:54px;height:41px;background:#fee3a1;"><span class="n">۳۲,۸۸۹</span></div>
<div class="c d" style="left:589px;top:649px;width:58px;height:41px;background:#fee3a1;"><span class="n">۱۷,۳۳۷</span></div>
<div class="c d" style="left:510px;top:649px;width:79px;height:41px;background:#fee3a1;"><span class="n">۱۹,۵۱۹,۲۳۶</span></div>
<div class="c d" style="left:409px;top:649px;width:101px;height:41px;background:#fee3a1;"><span class="n"><span class="nb">۳۳۸,۴<i class="z"></i>۵</span></span></div>
<div class="c d" style="left:353px;top:649px;width:56px;height:41px;background:#efefef;"><span class="n">۴۱,۹۴۷</span></div>
<div class="c d" style="left:294px;top:649px;width:59px;height:41px;background:#efefef;"><span class="n">۳۵,۵۴۱</span></div>
<div class="c d" style="left:215px;top:649px;width:79px;height:41px;background:#fee3a1;"><span class="n"><span class="nb">۱۱,<i class="z"></i>۲۵,۴۹۲</span></span></div>
<div class="c d" style="left:116px;top:649px;width:99px;height:41px;background:#efefef;"><span class="n">۳۹۱,۸۵۷</span></div>
<div class="c d st" style="left:35px;top:649px;width:81px;height:41px;background:#efefef;">تولید</div>
<div class="c d nm" style="left:1785px;top:690px;width:100px;height:24px;background:#fee3a1;border-right-width:1px;">جمع فروش داخلی</div>
<div class="c d un" style="left:1758px;top:690px;width:27px;height:24px;background:#fee3a1;"></div>
<div class="c d" style="left:1703px;top:690px;width:55px;height:24px;background:#fee3a1;"><span class="n">۴۶۱,۳۲۱</span></div>
<div class="c d" style="left:1645px;top:690px;width:58px;height:24px;background:#fee3a1;"><span class="n"><span class="nb">۴۵۲,<i class="z"></i>۶۹</span></span></div>
<div class="c d" style="left:1564px;top:690px;width:81px;height:24px;background:#fee3a1;"></div>
<div class="c d" style="left:1464px;top:690px;width:100px;height:24px;background:#fee3a1;"><span class="n"><span class="nb">۱<i class="z"></i>,۸<i class="z"></i>۸,۹<i class="z"></i>۴</span></span></div>
<div class="c d" style="left:1419px;top:690px;width:45px;height:24px;background:#fee3a1;"><span class="n"><span class="nb"><i class="z"></i></span></span></div>
<div class="c d" style="left:1367px;top:690px;width:52px;height:24px;background:#fee3a1;"><span class="n"><span class="nb"><i class="z"></i></span></span></div>
<div class="c d" style="left:1278px;top:690px;width:89px;height:24px;background:#fee3a1;"><span class="n"><span class="nb"><i class="z"></i></span></span></div>
<div class="c d" style="left:1223px;top:690px;width:55px;height:24px;background:#fee3a1;"><span class="n">۴۶۱,۳۲۱</span></div>
<div class="c d" style="left:1165px;top:690px;width:58px;height:24px;background:#fee3a1;"><span class="n"><span class="nb">۴۵۲,<i class="z"></i>۶۹</span></span></div>
<div class="c d" style="left:1085px;top:690px;width:80px;height:24px;background:#fee3a1;"></div>
<div class="c d" style="left:985px;top:690px;width:100px;height:24px;background:#fee3a1;"><span class="n"><span class="nb">۱<i class="z"></i>,۸<i class="z"></i>۸,۹<i class="z"></i>۴</span></span></div>
<div class="c d" style="left:933px;top:690px;width:52px;height:24px;background:#fee3a1;"><span class="n">۷۹,۹۹۶</span></div>
<div class="c d" style="left:878px;top:690px;width:55px;height:24px;background:#fee3a1;"><span class="n"><span class="nb">۷۲,۲<i class="z"></i>۲</span></span></div>
<div class="c d" style="left:798px;top:690px;width:80px;height:24px;background:#fee3a1;"></div>
<div class="c d" style="left:701px;top:690px;width:97px;height:24px;background:#fee3a1;"><span class="n"><span class="nb">۱,۹۶۱,<i class="z"></i><i class="z"></i>۲</span></span></div>
<div class="c d" style="left:647px;top:690px;width:54px;height:24px;background:#fee3a1;"><span class="n">۵۴۱,۳۱۷</span></div>
<div class="c d" style="left:589px;top:690px;width:58px;height:24px;background:#fee3a1;"><span class="n">۵۲۴,۲۷۱</span></div>
<div class="c d" style="left:510px;top:690px;width:79px;height:24px;background:#fee3a1;"></div>
<div class="c d" style="left:409px;top:690px;width:101px;height:24px;background:#fee3a1;"><span class="n"><span class="nb">۱۲,۷۶۹,۹<i class="z"></i>۶</span></span></div>
<div class="c d" style="left:353px;top:690px;width:56px;height:24px;background:#fee3a1;"><span class="n"><span class="nb">۶<i class="z"></i>۵,۷۱۷</span></span></div>
<div class="c d" style="left:294px;top:690px;width:59px;height:24px;background:#fee3a1;"><span class="n">۶۱۲,۳۸۲</span></div>
<div class="c d" style="left:215px;top:690px;width:79px;height:24px;background:#fee3a1;"></div>
<div class="c d" style="left:116px;top:690px;width:99px;height:24px;background:#fee3a1;"><span class="n">۷,۹۵۱,۹۶۴</span></div>
<div class="c d st" style="left:35px;top:690px;width:81px;height:24px;background:#fee3a1;"></div>
<div class="c d nm sec" style="left:1785px;top:714px;width:100px;height:24px;background:#d4d4d4;border-right-width:1px;">فروش صادراتی:</div>
<div class="c d un" style="left:1758px;top:714px;width:27px;height:24px;background:#d4d4d4;"></div>
<div class="c d" style="left:1703px;top:714px;width:55px;height:24px;background:#d4d4d4;"></div>
<div class="c d" style="left:1645px;top:714px;width:58px;height:24px;background:#d4d4d4;"></div>
<div class="c d" style="left:1564px;top:714px;width:81px;height:24px;background:#d4d4d4;"></div>
<div class="c d" style="left:1464px;top:714px;width:100px;height:24px;background:#d4d4d4;"></div>
<div class="c d" style="left:1419px;top:714px;width:45px;height:24px;background:#d4d4d4;"></div>
<div class="c d" style="left:1367px;top:714px;width:52px;height:24px;background:#d4d4d4;"></div>
<div class="c d" style="left:1278px;top:714px;width:89px;height:24px;background:#d4d4d4;"></div>
<div class="c d" style="left:1223px;top:714px;width:55px;height:24px;background:#d4d4d4;"></div>
<div class="c d" style="left:1165px;top:714px;width:58px;height:24px;background:#d4d4d4;"></div>
<div class="c d" style="left:1085px;top:714px;width:80px;height:24px;background:#d4d4d4;"></div>
<div class="c d" style="left:985px;top:714px;width:100px;height:24px;background:#d4d4d4;"></div>
<div class="c d" style="left:933px;top:714px;width:52px;height:24px;background:#d4d4d4;"></div>
<div class="c d" style="left:878px;top:714px;width:55px;height:24px;background:#d4d4d4;"></div>
<div class="c d" style="left:798px;top:714px;width:80px;height:24px;background:#d4d4d4;"></div>
<div class="c d" style="left:701px;top:714px;width:97px;height:24px;background:#d4d4d4;"></div>
<div class="c d" style="left:647px;top:714px;width:54px;height:24px;background:#d4d4d4;"></div>
<div class="c d" style="left:589px;top:714px;width:58px;height:24px;background:#d4d4d4;"></div>
<div class="c d" style="left:510px;top:714px;width:79px;height:24px;background:#d4d4d4;"></div>
<div class="c d" style="left:409px;top:714px;width:101px;height:24px;background:#d4d4d4;"></div>
<div class="c d" style="left:353px;top:714px;width:56px;height:24px;background:#d4d4d4;"></div>
<div class="c d" style="left:294px;top:714px;width:59px;height:24px;background:#d4d4d4;"></div>
<div class="c d" style="left:215px;top:714px;width:79px;height:24px;background:#d4d4d4;"></div>
<div class="c d" style="left:116px;top:714px;width:99px;height:24px;background:#d4d4d4;"></div>
<div class="c d st" style="left:35px;top:714px;width:81px;height:24px;background:#d4d4d4;"></div>
<div class="c d nm" style="left:1785px;top:738px;width:100px;height:41px;background:#efefef;border-right-width:1px;">پاکتي تیپ ۲<br>صادراتي</div>
<div class="c d un" style="left:1758px;top:738px;width:27px;height:41px;background:#efefef;">تن</div>
<div class="c d" style="left:1703px;top:738px;width:55px;height:41px;background:#efefef;"><span class="n"><span class="nb">۷,<i class="z"></i>۲۸</span></span></div>
<div class="c d" style="left:1645px;top:738px;width:58px;height:41px;background:#efefef;"><span class="n"><span class="nb">۱,<i class="z"></i>۲۸</span></span></div>
<div class="c d" style="left:1564px;top:738px;width:81px;height:41px;background:#fee3a1;"><span class="n">۳۱,۸۷۷,۴۳۲</span></div>
<div class="c d" style="left:1464px;top:738px;width:100px;height:41px;background:#efefef;"><span class="n"><span class="nb">۳۲,۷۷<i class="z"></i></span></span></div>
<div class="c d" style="left:1419px;top:738px;width:45px;height:41px;background:#efefef;"><span class="n"><span class="nb"><i class="z"></i></span></span></div>
<div class="c d" style="left:1367px;top:738px;width:52px;height:41px;background:#efefef;"><span class="n"><span class="nb"><i class="z"></i></span></span></div>
<div class="c d" style="left:1278px;top:738px;width:89px;height:41px;background:#efefef;"><span class="n"><span class="nb"><i class="z"></i></span></span></div>
<div class="c d" style="left:1223px;top:738px;width:55px;height:41px;background:#fee3a1;"><span class="n"><span class="nb">۷,<i class="z"></i>۲۸</span></span></div>
<div class="c d" style="left:1165px;top:738px;width:58px;height:41px;background:#fee3a1;"><span class="n"><span class="nb">۱,<i class="z"></i>۲۸</span></span></div>
<div class="c d" style="left:1085px;top:738px;width:80px;height:41px;background:#fee3a1;"><span class="n">۳۱,۸۷۷,۴۳۲</span></div>
<div class="c d" style="left:985px;top:738px;width:100px;height:41px;background:#fee3a1;"><span class="n"><span class="nb">۳۲,۷۷<i class="z"></i></span></span></div>
<div class="c d" style="left:933px;top:738px;width:52px;height:41px;background:#efefef;"></div>
<div class="c d" style="left:878px;top:738px;width:55px;height:41px;background:#efefef;"><span class="n"><span class="nb">۴,<i class="z"></i>۷۳</span></span></div>
<div class="c d" style="left:798px;top:738px;width:80px;height:41px;background:#fee3a1;"><span class="n"><span class="nb">۲۹,۸<i class="z"></i>۹,۷۲۳</span></span></div>
<div class="c d" style="left:701px;top:738px;width:97px;height:41px;background:#efefef;"><span class="n">۱۲۱,۴۱۵</span></div>
<div class="c d" style="left:647px;top:738px;width:54px;height:41px;background:#fee3a1;"><span class="n"><span class="nb">۷,<i class="z"></i>۲۸</span></span></div>
<div class="c d" style="left:589px;top:738px;width:58px;height:41px;background:#fee3a1;"><span class="n"><span class="nb">۵,۱<i class="z"></i>۱</span></span></div>
<div class="c d" style="left:510px;top:738px;width:79px;height:41px;background:#fee3a1;"><span class="n"><span class="nb">۳<i class="z"></i>,۲۲۶,۴۲۶</span></span></div>
<div class="c d" style="left:409px;top:738px;width:101px;height:41px;background:#fee3a1;"><span class="n">۱۵۴,۱۸۵</span></div>
<div class="c d" style="left:353px;top:738px;width:56px;height:41px;background:#efefef;"><span class="n">۴,۸۶۸</span></div>
<div class="c d" style="left:294px;top:738px;width:59px;height:41px;background:#efefef;"><span class="n">۴,۸۶۸</span></div>
<div class="c d" style="left:215px;top:738px;width:79px;height:41px;background:#fee3a1;"><span class="n"><span class="nb">۱۹,۷۲<i class="z"></i>,<i class="z"></i><i class="z"></i>۸</span></span></div>
<div class="c d" style="left:116px;top:738px;width:99px;height:41px;background:#efefef;"><span class="n">۹۵,۹۹۷</span></div>
<div class="c d st" style="left:35px;top:738px;width:81px;height:41px;background:#efefef;">تولید</div>
<div class="c d nm" style="left:1785px;top:779px;width:100px;height:42px;background:#d3e5f7;border-right-width:1px;">سیملن فله<br>صادراتي تیپ ۲</div>
<div class="c d un" style="left:1758px;top:779px;width:27px;height:42px;background:#d3e5f7;">تن</div>
<div class="c d" style="left:1703px;top:779px;width:55px;height:42px;background:#d3e5f7;"><span class="n"><span class="nb">۵<i class="z"></i><i class="z"></i></span></span></div>
<div class="c d" style="left:1645px;top:779px;width:58px;height:42px;background:#d3e5f7;"><span class="n"><span class="nb">۵<i class="z"></i><i class="z"></i></span></span></div>
<div class="c d" style="left:1564px;top:779px;width:81px;height:42px;background:#fee3a1;"><span class="n"><span class="nb">۲۵,۱۸۸,<i class="z"></i><i class="z"></i><i class="z"></i></span></span></div>
<div class="c d" style="left:1464px;top:779px;width:100px;height:42px;background:#d3e5f7;"><span class="n">۱۲,۵۹۴</span></div>
<div class="c d" style="left:1419px;top:779px;width:45px;height:42px;background:#d3e5f7;"><span class="n"><span class="nb"><i class="z"></i></span></span></div>
<div class="c d" style="left:1367px;top:779px;width:52px;height:42px;background:#d3e5f7;"><span class="n"><span class="nb"><i class="z"></i></span></span></div>
<div class="c d" style="left:1278px;top:779px;width:89px;height:42px;background:#d3e5f7;"><span class="n"><span class="nb"><i class="z"></i></span></span></div>
<div class="c d" style="left:1223px;top:779px;width:55px;height:42px;background:#fee3a1;"><span class="n"><span class="nb">۵<i class="z"></i><i class="z"></i></span></span></div>
<div class="c d" style="left:1165px;top:779px;width:58px;height:42px;background:#fee3a1;"><span class="n"><span class="nb">۵<i class="z"></i><i class="z"></i></span></span></div>
<div class="c d" style="left:1085px;top:779px;width:80px;height:42px;background:#fee3a1;"><span class="n"><span class="nb">۲۵,۱۸۸,<i class="z"></i><i class="z"></i><i class="z"></i></span></span></div>
<div class="c d" style="left:985px;top:779px;width:100px;height:42px;background:#fee3a1;"><span class="n">۱۲,۵۹۴</span></div>
<div class="c d" style="left:933px;top:779px;width:52px;height:42px;background:#d3e5f7;"></div>
<div class="c d" style="left:878px;top:779px;width:55px;height:42px;background:#d3e5f7;"></div>
<div class="c d" style="left:798px;top:779px;width:80px;height:42px;background:#fee3a1;"><span class="n"><span class="nb"><i class="z"></i></span></span></div>
<div class="c d" style="left:701px;top:779px;width:97px;height:42px;background:#d3e5f7;"><span class="n"><span class="nb"><i class="z"></i></span></span></div>
<div class="c d" style="left:647px;top:779px;width:54px;height:42px;background:#fee3a1;"><span class="n"><span class="nb">۵<i class="z"></i><i class="z"></i></span></span></div>
<div class="c d" style="left:589px;top:779px;width:58px;height:42px;background:#fee3a1;"><span class="n"><span class="nb">۵<i class="z"></i><i class="z"></i></span></span></div>
<div class="c d" style="left:510px;top:779px;width:79px;height:42px;background:#fee3a1;"><span class="n"><span class="nb">۲۵,۱۸۸,<i class="z"></i><i class="z"></i><i class="z"></i></span></span></div>
<div class="c d" style="left:409px;top:779px;width:101px;height:42px;background:#fee3a1;"><span class="n">۱۲,۵۹۴</span></div>
<div class="c d" style="left:353px;top:779px;width:56px;height:42px;background:#d3e5f7;"><span class="n"><span class="nb"><i class="z"></i></span></span></div>
<div class="c d" style="left:294px;top:779px;width:59px;height:42px;background:#d3e5f7;"><span class="n"><span class="nb"><i class="z"></i></span></span></div>
<div class="c d" style="left:215px;top:779px;width:79px;height:42px;background:#fee3a1;"><span class="n"><span class="nb"><i class="z"></i></span></span></div>
<div class="c d" style="left:116px;top:779px;width:99px;height:42px;background:#d3e5f7;"><span class="n"><span class="nb"><i class="z"></i></span></span></div>
<div class="c d st" style="left:35px;top:779px;width:81px;height:42px;background:#d3e5f7;">تولید</div>
<div class="c d nm" style="left:1785px;top:821px;width:100px;height:41px;background:#fee3a1;border-right-width:1px;">جمع فروش<br>صادراتی</div>
<div class="c d un" style="left:1758px;top:821px;width:27px;height:41px;background:#fee3a1;"></div>
<div class="c d" style="left:1703px;top:821px;width:55px;height:41px;background:#fee3a1;"><span class="n">۷,۵۲۸</span></div>
<div class="c d" style="left:1645px;top:821px;width:58px;height:41px;background:#fee3a1;"><span class="n">۱,۵۲۸</span></div>
<div class="c d" style="left:1564px;top:821px;width:81px;height:41px;background:#fee3a1;"></div>
<div class="c d" style="left:1464px;top:821px;width:100px;height:41px;background:#fee3a1;"><span class="n">۴۵,۳۶۴</span></div>
<div class="c d" style="left:1419px;top:821px;width:45px;height:41px;background:#fee3a1;"><span class="n"><span class="nb"><i class="z"></i></span></span></div>
<div class="c d" style="left:1367px;top:821px;width:52px;height:41px;background:#fee3a1;"><span class="n"><span class="nb"><i class="z"></i></span></span></div>
<div class="c d" style="left:1278px;top:821px;width:89px;height:41px;background:#fee3a1;"><span class="n"><span class="nb"><i class="z"></i></span></span></div>
<div class="c d" style="left:1223px;top:821px;width:55px;height:41px;background:#fee3a1;"><span class="n">۷,۵۲۸</span></div>
<div class="c d" style="left:1165px;top:821px;width:58px;height:41px;background:#fee3a1;"><span class="n">۱,۵۲۸</span></div>
<div class="c d" style="left:1085px;top:821px;width:80px;height:41px;background:#fee3a1;"></div>
<div class="c d" style="left:985px;top:821px;width:100px;height:41px;background:#fee3a1;"><span class="n">۴۵,۳۶۴</span></div>
<div class="c d" style="left:933px;top:821px;width:52px;height:41px;background:#fee3a1;"><span class="n"><span class="nb"><i class="z"></i></span></span></div>
<div class="c d" style="left:878px;top:821px;width:55px;height:41px;background:#fee3a1;"><span class="n"><span class="nb">۴,<i class="z"></i>۷۳</span></span></div>
<div class="c d" style="left:798px;top:821px;width:80px;height:41px;background:#fee3a1;"></div>
<div class="c d" style="left:701px;top:821px;width:97px;height:41px;background:#fee3a1;"><span class="n">۱۲۱,۴۱۵</span></div>
<div class="c d" style="left:647px;top:821px;width:54px;height:41px;background:#fee3a1;"><span class="n">۷,۵۲۸</span></div>
<div class="c d" style="left:589px;top:821px;width:58px;height:41px;background:#fee3a1;"><span class="n"><span class="nb">۵,۶<i class="z"></i>۱</span></span></div>
<div class="c d" style="left:510px;top:821px;width:79px;height:41px;background:#fee3a1;"></div>
<div class="c d" style="left:409px;top:821px;width:101px;height:41px;background:#fee3a1;"><span class="n">۱۶۶,۷۷۹</span></div>
<div class="c d" style="left:353px;top:821px;width:56px;height:41px;background:#fee3a1;"><span class="n">۴,۸۶۸</span></div>
<div class="c d" style="left:294px;top:821px;width:59px;height:41px;background:#fee3a1;"><span class="n">۴,۸۶۸</span></div>
<div class="c d" style="left:215px;top:821px;width:79px;height:41px;background:#fee3a1;"></div>
<div class="c d" style="left:116px;top:821px;width:99px;height:41px;background:#fee3a1;"><span class="n">۹۵,۹۹۷</span></div>
<div class="c d st" style="left:35px;top:821px;width:81px;height:41px;background:#fee3a1;"></div>
<div class="c d nm sec" style="left:1785px;top:862px;width:100px;height:24px;background:#d4d4d4;border-right-width:1px;">درآمد ارائه خدمات:</div>
<div class="c d un" style="left:1758px;top:862px;width:27px;height:24px;background:#d4d4d4;"></div>
<div class="c d" style="left:1703px;top:862px;width:55px;height:24px;background:#d4d4d4;"></div>
<div class="c d" style="left:1645px;top:862px;width:58px;height:24px;background:#d4d4d4;"></div>
<div class="c d" style="left:1564px;top:862px;width:81px;height:24px;background:#d4d4d4;"></div>
<div class="c d" style="left:1464px;top:862px;width:100px;height:24px;background:#d4d4d4;"></div>
<div class="c d" style="left:1419px;top:862px;width:45px;height:24px;background:#d4d4d4;"></div>
<div class="c d" style="left:1367px;top:862px;width:52px;height:24px;background:#d4d4d4;"></div>
<div class="c d" style="left:1278px;top:862px;width:89px;height:24px;background:#d4d4d4;"></div>
<div class="c d" style="left:1223px;top:862px;width:55px;height:24px;background:#d4d4d4;"></div>
<div class="c d" style="left:1165px;top:862px;width:58px;height:24px;background:#d4d4d4;"></div>
<div class="c d" style="left:1085px;top:862px;width:80px;height:24px;background:#d4d4d4;"></div>
<div class="c d" style="left:985px;top:862px;width:100px;height:24px;background:#d4d4d4;"></div>
<div class="c d" style="left:933px;top:862px;width:52px;height:24px;background:#d4d4d4;"></div>
<div class="c d" style="left:878px;top:862px;width:55px;height:24px;background:#d4d4d4;"></div>
<div class="c d" style="left:798px;top:862px;width:80px;height:24px;background:#d4d4d4;"></div>
<div class="c d" style="left:701px;top:862px;width:97px;height:24px;background:#d4d4d4;"></div>
<div class="c d" style="left:647px;top:862px;width:54px;height:24px;background:#d4d4d4;"></div>
<div class="c d" style="left:589px;top:862px;width:58px;height:24px;background:#d4d4d4;"></div>
<div class="c d" style="left:510px;top:862px;width:79px;height:24px;background:#d4d4d4;"></div>
<div class="c d" style="left:409px;top:862px;width:101px;height:24px;background:#d4d4d4;"></div>
<div class="c d" style="left:353px;top:862px;width:56px;height:24px;background:#d4d4d4;"></div>
<div class="c d" style="left:294px;top:862px;width:59px;height:24px;background:#d4d4d4;"></div>
<div class="c d" style="left:215px;top:862px;width:79px;height:24px;background:#d4d4d4;"></div>
<div class="c d" style="left:116px;top:862px;width:99px;height:24px;background:#d4d4d4;"></div>
<div class="c d st" style="left:35px;top:862px;width:81px;height:24px;background:#d4d4d4;"></div>
<div class="c d nm" style="left:1785px;top:886px;width:100px;height:41px;background:#fee3a1;border-right-width:1px;">جمع درآمد ارائه<br>خدمات</div>
<div class="c d un" style="left:1758px;top:886px;width:27px;height:41px;background:#fee3a1;"></div>
<div class="c d" style="left:1703px;top:886px;width:55px;height:41px;background:#fee3a1;"><span class="n"><span class="nb"><i class="z"></i></span></span></div>
<div class="c d" style="left:1645px;top:886px;width:58px;height:41px;background:#fee3a1;"><span class="n"><span class="nb"><i class="z"></i></span></span></div>
<div class="c d" style="left:1564px;top:886px;width:81px;height:41px;background:#fee3a1;"></div>
<div class="c d" style="left:1464px;top:886px;width:100px;height:41px;background:#fee3a1;"><span class="n"><span class="nb"><i class="z"></i></span></span></div>
<div class="c d" style="left:1419px;top:886px;width:45px;height:41px;background:#fee3a1;"><span class="n"><span class="nb"><i class="z"></i></span></span></div>
<div class="c d" style="left:1367px;top:886px;width:52px;height:41px;background:#fee3a1;"><span class="n"><span class="nb"><i class="z"></i></span></span></div>
<div class="c d" style="left:1278px;top:886px;width:89px;height:41px;background:#fee3a1;"><span class="n"><span class="nb"><i class="z"></i></span></span></div>
<div class="c d" style="left:1223px;top:886px;width:55px;height:41px;background:#fee3a1;"><span class="n"><span class="nb"><i class="z"></i></span></span></div>
<div class="c d" style="left:1165px;top:886px;width:58px;height:41px;background:#fee3a1;"><span class="n"><span class="nb"><i class="z"></i></span></span></div>
<div class="c d" style="left:1085px;top:886px;width:80px;height:41px;background:#fee3a1;"></div>
<div class="c d" style="left:985px;top:886px;width:100px;height:41px;background:#fee3a1;"><span class="n"><span class="nb"><i class="z"></i></span></span></div>
<div class="c d" style="left:933px;top:886px;width:52px;height:41px;background:#fee3a1;"><span class="n"><span class="nb"><i class="z"></i></span></span></div>
<div class="c d" style="left:878px;top:886px;width:55px;height:41px;background:#fee3a1;"><span class="n"><span class="nb"><i class="z"></i></span></span></div>
<div class="c d" style="left:798px;top:886px;width:80px;height:41px;background:#fee3a1;"></div>
<div class="c d" style="left:701px;top:886px;width:97px;height:41px;background:#fee3a1;"><span class="n"><span class="nb"><i class="z"></i></span></span></div>
<div class="c d" style="left:647px;top:886px;width:54px;height:41px;background:#fee3a1;"><span class="n"><span class="nb"><i class="z"></i></span></span></div>
<div class="c d" style="left:589px;top:886px;width:58px;height:41px;background:#fee3a1;"><span class="n"><span class="nb"><i class="z"></i></span></span></div>
<div class="c d" style="left:510px;top:886px;width:79px;height:41px;background:#fee3a1;"></div>
<div class="c d" style="left:409px;top:886px;width:101px;height:41px;background:#fee3a1;"><span class="n"><span class="nb"><i class="z"></i></span></span></div>
<div class="c d" style="left:353px;top:886px;width:56px;height:41px;background:#fee3a1;"><span class="n"><span class="nb"><i class="z"></i></span></span></div>
<div class="c d" style="left:294px;top:886px;width:59px;height:41px;background:#fee3a1;"><span class="n"><span class="nb"><i class="z"></i></span></span></div>
<div class="c d" style="left:215px;top:886px;width:79px;height:41px;background:#fee3a1;"></div>
<div class="c d" style="left:116px;top:886px;width:99px;height:41px;background:#fee3a1;"><span class="n"><span class="nb"><i class="z"></i></span></span></div>
<div class="c d st" style="left:35px;top:886px;width:81px;height:41px;background:#fee3a1;"></div>
<div class="c d nm sec" style="left:1785px;top:927px;width:100px;height:25px;background:#d4d4d4;border-right-width:1px;">برگشت از فروش:</div>
<div class="c d un" style="left:1758px;top:927px;width:27px;height:25px;background:#d4d4d4;"></div>
<div class="c d" style="left:1703px;top:927px;width:55px;height:25px;background:#d4d4d4;"></div>
<div class="c d" style="left:1645px;top:927px;width:58px;height:25px;background:#d4d4d4;"></div>
<div class="c d" style="left:1564px;top:927px;width:81px;height:25px;background:#d4d4d4;"></div>
<div class="c d" style="left:1464px;top:927px;width:100px;height:25px;background:#d4d4d4;"></div>
<div class="c d" style="left:1419px;top:927px;width:45px;height:25px;background:#d4d4d4;"></div>
<div class="c d" style="left:1367px;top:927px;width:52px;height:25px;background:#d4d4d4;"></div>
<div class="c d" style="left:1278px;top:927px;width:89px;height:25px;background:#d4d4d4;"></div>
<div class="c d" style="left:1223px;top:927px;width:55px;height:25px;background:#d4d4d4;"></div>
<div class="c d" style="left:1165px;top:927px;width:58px;height:25px;background:#d4d4d4;"></div>
<div class="c d" style="left:1085px;top:927px;width:80px;height:25px;background:#d4d4d4;"></div>
<div class="c d" style="left:985px;top:927px;width:100px;height:25px;background:#d4d4d4;"></div>
<div class="c d" style="left:933px;top:927px;width:52px;height:25px;background:#d4d4d4;"></div>
<div class="c d" style="left:878px;top:927px;width:55px;height:25px;background:#d4d4d4;"></div>
<div class="c d" style="left:798px;top:927px;width:80px;height:25px;background:#d4d4d4;"></div>
<div class="c d" style="left:701px;top:927px;width:97px;height:25px;background:#d4d4d4;"></div>
<div class="c d" style="left:647px;top:927px;width:54px;height:25px;background:#d4d4d4;"></div>
<div class="c d" style="left:589px;top:927px;width:58px;height:25px;background:#d4d4d4;"></div>
<div class="c d" style="left:510px;top:927px;width:79px;height:25px;background:#d4d4d4;"></div>
<div class="c d" style="left:409px;top:927px;width:101px;height:25px;background:#d4d4d4;"></div>
<div class="c d" style="left:353px;top:927px;width:56px;height:25px;background:#d4d4d4;"></div>
<div class="c d" style="left:294px;top:927px;width:59px;height:25px;background:#d4d4d4;"></div>
<div class="c d" style="left:215px;top:927px;width:79px;height:25px;background:#d4d4d4;"></div>
<div class="c d" style="left:116px;top:927px;width:99px;height:25px;background:#d4d4d4;"></div>
<div class="c d st" style="left:35px;top:927px;width:81px;height:25px;background:#d4d4d4;"></div>
<div class="c d nm" style="left:1785px;top:952px;width:100px;height:41px;background:#fee3a1;border-right-width:1px;">جمع برگشت از<br>فروش</div>
<div class="c d un" style="left:1758px;top:952px;width:27px;height:41px;background:#fee3a1;"></div>
<div class="c d" style="left:1703px;top:952px;width:55px;height:41px;background:#fee3a1;"></div>
<div class="c d" style="left:1645px;top:952px;width:58px;height:41px;background:#fee3a1;"><span class="n"><span class="nb"><i class="z"></i></span></span></div>
<div class="c d" style="left:1564px;top:952px;width:81px;height:41px;background:#fee3a1;"></div>
<div class="c d" style="left:1464px;top:952px;width:100px;height:41px;background:#fee3a1;"><span class="n"><span class="nb"><i class="z"></i></span></span></div>
<div class="c d" style="left:1419px;top:952px;width:45px;height:41px;background:#fee3a1;"></div>
<div class="c d" style="left:1367px;top:952px;width:52px;height:41px;background:#fee3a1;"><span class="n"><span class="nb"><i class="z"></i></span></span></div>
<div class="c d" style="left:1278px;top:952px;width:89px;height:41px;background:#fee3a1;"><span class="n"><span class="nb"><i class="z"></i></span></span></div>
<div class="c d" style="left:1223px;top:952px;width:55px;height:41px;background:#fee3a1;"></div>
<div class="c d" style="left:1165px;top:952px;width:58px;height:41px;background:#fee3a1;"><span class="n"><span class="nb"><i class="z"></i></span></span></div>
<div class="c d" style="left:1085px;top:952px;width:80px;height:41px;background:#fee3a1;"></div>
<div class="c d" style="left:985px;top:952px;width:100px;height:41px;background:#fee3a1;"><span class="n"><span class="nb"><i class="z"></i></span></span></div>
<div class="c d" style="left:933px;top:952px;width:52px;height:41px;background:#fee3a1;"></div>
<div class="c d" style="left:878px;top:952px;width:55px;height:41px;background:#fee3a1;"><span class="n"><span class="nb"><i class="z"></i></span></span></div>
<div class="c d" style="left:798px;top:952px;width:80px;height:41px;background:#fee3a1;"></div>
<div class="c d" style="left:701px;top:952px;width:97px;height:41px;background:#fee3a1;"><span class="n"><span class="nb"><i class="z"></i></span></span></div>
<div class="c d" style="left:647px;top:952px;width:54px;height:41px;background:#fee3a1;"></div>
<div class="c d" style="left:589px;top:952px;width:58px;height:41px;background:#fee3a1;"><span class="n"><span class="nb"><i class="z"></i></span></span></div>
<div class="c d" style="left:510px;top:952px;width:79px;height:41px;background:#fee3a1;"></div>
<div class="c d" style="left:409px;top:952px;width:101px;height:41px;background:#fee3a1;"><span class="n"><span class="nb"><i class="z"></i></span></span></div>
<div class="c d" style="left:353px;top:952px;width:56px;height:41px;background:#fee3a1;"></div>
<div class="c d" style="left:294px;top:952px;width:59px;height:41px;background:#fee3a1;"><span class="n"><span class="nb"><i class="z"></i></span></span></div>
<div class="c d" style="left:215px;top:952px;width:79px;height:41px;background:#fee3a1;"></div>
<div class="c d" style="left:116px;top:952px;width:99px;height:41px;background:#fee3a1;"><span class="n"><span class="nb"><i class="z"></i></span></span></div>
<div class="c d st" style="left:35px;top:952px;width:81px;height:41px;background:#fee3a1;"></div>
<div class="c d nm" style="left:1785px;top:993px;width:100px;height:24px;background:#efefef;border-right-width:1px;">تخفیفات</div>
<div class="c d un" style="left:1758px;top:993px;width:27px;height:24px;background:#efefef;"></div>
<div class="c d" style="left:1703px;top:993px;width:55px;height:24px;background:#d4d4d4;"></div>
<div class="c d" style="left:1645px;top:993px;width:58px;height:24px;background:#d4d4d4;"></div>
<div class="c d" style="left:1564px;top:993px;width:81px;height:24px;background:#d4d4d4;"></div>
<div class="c d" style="left:1464px;top:993px;width:100px;height:24px;background:#efefef;"><span class="n"><span class="nb"><i class="z"></i></span></span></div>
<div class="c d" style="left:1419px;top:993px;width:45px;height:24px;background:#d4d4d4;"></div>
<div class="c d" style="left:1367px;top:993px;width:52px;height:24px;background:#d4d4d4;"></div>
<div class="c d" style="left:1278px;top:993px;width:89px;height:24px;background:#efefef;"><span class="n"><span class="nb"><i class="z"></i></span></span></div>
<div class="c d" style="left:1223px;top:993px;width:55px;height:24px;background:#d4d4d4;"></div>
<div class="c d" style="left:1165px;top:993px;width:58px;height:24px;background:#d4d4d4;"></div>
<div class="c d" style="left:1085px;top:993px;width:80px;height:24px;background:#d4d4d4;"></div>
<div class="c d ra" style="left:985px;top:993px;width:100px;height:24px;background:#efefef;"><span class="n"><span class="nb"><i class="z"></i></span></span></div>
<div class="c d" style="left:933px;top:993px;width:52px;height:24px;background:#d4d4d4;"></div>
<div class="c d" style="left:878px;top:993px;width:55px;height:24px;background:#d4d4d4;"></div>
<div class="c d" style="left:798px;top:993px;width:80px;height:24px;background:#d4d4d4;"></div>
<div class="c d" style="left:701px;top:993px;width:97px;height:24px;background:#efefef;"><span class="n"><span class="nb"><i class="z"></i></span></span></div>
<div class="c d" style="left:647px;top:993px;width:54px;height:24px;background:#d4d4d4;"></div>
<div class="c d" style="left:589px;top:993px;width:58px;height:24px;background:#d4d4d4;"></div>
<div class="c d" style="left:510px;top:993px;width:79px;height:24px;background:#d4d4d4;"></div>
<div class="c d" style="left:409px;top:993px;width:101px;height:24px;background:#efefef;"><span class="n"><span class="nb"><i class="z"></i></span></span></div>
<div class="c d" style="left:353px;top:993px;width:56px;height:24px;background:#d4d4d4;"></div>
<div class="c d" style="left:294px;top:993px;width:59px;height:24px;background:#d4d4d4;"></div>
<div class="c d" style="left:215px;top:993px;width:79px;height:24px;background:#d4d4d4;"></div>
<div class="c d" style="left:116px;top:993px;width:99px;height:24px;background:#efefef;"><span class="n"><span class="nb"><i class="z"></i></span></span></div>
<div class="c d st" style="left:35px;top:993px;width:81px;height:24px;background:#efefef;"></div>
<div class="c d nm" style="left:1785px;top:1017px;width:100px;height:25px;background:#fee3a1;border-bottom-width:1px;border-right-width:1px;">جمع</div>
<div class="c d un" style="left:1758px;top:1017px;width:27px;height:25px;background:#fee3a1;border-bottom-width:1px;"></div>
<div class="c d" style="left:1703px;top:1017px;width:55px;height:25px;background:#fee3a1;border-bottom-width:1px;"></div>
<div class="c d" style="left:1645px;top:1017px;width:58px;height:25px;background:#fee3a1;border-bottom-width:1px;"></div>
<div class="c d" style="left:1564px;top:1017px;width:81px;height:25px;background:#fee3a1;border-bottom-width:1px;"></div>
<div class="c d" style="left:1464px;top:1017px;width:100px;height:25px;background:#fee3a1;border-bottom-width:1px;"><span class="n"><span class="nb">۱<i class="z"></i>,۸۵۴,۲۶۸</span></span></div>
<div class="c d" style="left:1419px;top:1017px;width:45px;height:25px;background:#fee3a1;border-bottom-width:1px;"></div>
<div class="c d" style="left:1367px;top:1017px;width:52px;height:25px;background:#fee3a1;border-bottom-width:1px;"></div>
<div class="c d" style="left:1278px;top:1017px;width:89px;height:25px;background:#fee3a1;border-bottom-width:1px;"><span class="n"><span class="nb"><i class="z"></i></span></span></div>
<div class="c d" style="left:1223px;top:1017px;width:55px;height:25px;background:#fee3a1;border-bottom-width:1px;"></div>
<div class="c d" style="left:1165px;top:1017px;width:58px;height:25px;background:#fee3a1;border-bottom-width:1px;"></div>
<div class="c d" style="left:1085px;top:1017px;width:80px;height:25px;background:#fee3a1;border-bottom-width:1px;"></div>
<div class="c d" style="left:985px;top:1017px;width:100px;height:25px;background:#fee3a1;border-bottom-width:1px;"><span class="n"><span class="nb">۱<i class="z"></i>,۸۵۴,۲۶۸</span></span></div>
<div class="c d" style="left:933px;top:1017px;width:52px;height:25px;background:#fee3a1;border-bottom-width:1px;"></div>
<div class="c d" style="left:878px;top:1017px;width:55px;height:25px;background:#fee3a1;border-bottom-width:1px;"></div>
<div class="c d" style="left:798px;top:1017px;width:80px;height:25px;background:#fee3a1;border-bottom-width:1px;"></div>
<div class="c d" style="left:701px;top:1017px;width:97px;height:25px;background:#fee3a1;border-bottom-width:1px;"><span class="n"><span class="nb">۲,<i class="z"></i>۸۲,۴۱۷</span></span></div>
<div class="c d" style="left:647px;top:1017px;width:54px;height:25px;background:#fee3a1;border-bottom-width:1px;"></div>
<div class="c d" style="left:589px;top:1017px;width:58px;height:25px;background:#fee3a1;border-bottom-width:1px;"></div>
<div class="c d" style="left:510px;top:1017px;width:79px;height:25px;background:#fee3a1;border-bottom-width:1px;"></div>
<div class="c d" style="left:409px;top:1017px;width:101px;height:25px;background:#fee3a1;border-bottom-width:1px;"><span class="n">۱۲,۹۳۶,۶۸۵</span></div>
<div class="c d" style="left:353px;top:1017px;width:56px;height:25px;background:#fee3a1;border-bottom-width:1px;"></div>
<div class="c d" style="left:294px;top:1017px;width:59px;height:25px;background:#fee3a1;border-bottom-width:1px;"></div>
<div class="c d" style="left:215px;top:1017px;width:79px;height:25px;background:#fee3a1;border-bottom-width:1px;"></div>
<div class="c d" style="left:116px;top:1017px;width:99px;height:25px;background:#fee3a1;border-bottom-width:1px;"><span class="n"><span class="nb">۸,<i class="z"></i>۴۷,۹۶۱</span></span></div>
<div class="c d st" style="left:35px;top:1017px;width:81px;height:25px;background:#fee3a1;border-bottom-width:1px;"></div>
<div class="bar" style="top:1052px"><span>خرید مواد اولیه</span></div>
<div id="wm"><span>@Codal360.ir</span></div>
</body>
</html>
